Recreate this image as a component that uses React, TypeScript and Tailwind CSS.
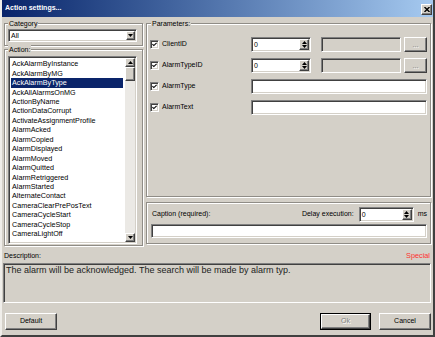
import React from 'react';

const sunken =
  'border border-t-[#808080] border-l-[#808080] border-b-white border-r-white shadow-[inset_1px_1px_0_#404040,inset_-1px_-1px_0_#d4d0c8] p-[1px]';
const raised =
  'border border-t-white border-l-white border-b-[#404040] border-r-[#404040] shadow-[inset_-1px_-1px_0_#808080,inset_1px_1px_0_#d4d0c8]';
const groupBox = 'relative border border-[#8f8c86] shadow-[1px_1px_0_#fff,inset_1px_1px_0_#fff]';

const actions = [
  'AckAlarmByInstance',
  'AckAlarmByMG',
  'AckAlarmByType',
  'AckAllAlarmsOnMG',
  'ActionByName',
  'ActionDataCorrupt',
  'ActivateAssignmentProfile',
  'AlarmAcked',
  'AlarmCopied',
  'AlarmDisplayed',
  'AlarmMoved',
  'AlarmQuitted',
  'AlarmRetriggered',
  'AlarmStarted',
  'AlternateContact',
  'CameraClearPrePosText',
  'CameraCycleStart',
  'CameraCycleStop',
  'CameraLightOff',
];

const params = [
  { label: 'ClientID', spin: true },
  { label: 'AlarmTypeID', spin: true },
  { label: 'AlarmType', spin: false },
  { label: 'AlarmText', spin: false },
];

function Arrow({ dir }: { dir: 'up' | 'down' }) {
  return (
    <svg width="5" height="3" viewBox="0 0 5 3">
      <polygon points={dir === 'up' ? '2.5,0 5,3 0,3' : '0,0 5,0 2.5,3'} fill="#000" />
    </svg>
  );
}

function SpinButton() {
  return (
    <div className={`${raised} w-[10px] h-full flex flex-col items-center justify-center gap-[1px] bg-[#d4d0c8]`}>
      <Arrow dir="up" />
      <Arrow dir="down" />
    </div>
  );
}

function SpinEdit({ width }: { width: string }) {
  return (
    <div className={`${sunken} ${width} h-[15px] bg-white flex items-stretch`}>
      <span className="flex-1 pl-[1px] leading-[11px]">0</span>
      <SpinButton />
    </div>
  );
}

function Check() {
  return (
    <div className={`${sunken} w-[9px] h-[9px] bg-white flex items-center justify-center p-0`}>
      <svg width="6" height="5" viewBox="0 0 6 5">
        <path d="M0.5 2 L2.2 3.8 L5.5 0.5" stroke="#000" strokeWidth="1.3" fill="none" />
      </svg>
    </div>
  );
}

export default function App() {
  return (
    <div className="w-[435px] h-[337px] bg-[#d4d0c8] border-x-2 border-b-2 border-l-[#f0eeea] border-r-[#404040] border-b-[#404040] flex flex-col text-black text-[7px] font-['Liberation_Sans',Arial,sans-serif]">
      {/* title bar */}
      <div className="h-[17px] flex items-center justify-between pl-[3px] pr-[1px] bg-linear-to-r from-[#0a246a] to-[#a6caf0]">
        <span className="text-white font-bold text-[7px]">Action settings...</span>
        <div className={`${raised} w-[11px] h-[11px] bg-[#d4d0c8] flex items-center justify-center mt-[1px]`}>
          <svg width="6" height="5" viewBox="0 0 6 5">
            <path d="M0.5 0 L5.5 5 M5.5 0 L0.5 5" stroke="#000" strokeWidth="1.4" />
          </svg>
        </div>
      </div>

      {/* main area */}
      <div className="flex gap-[3px] mt-[6px] ml-[2px]">
        {/* left column */}
        <div className="w-[139px] flex flex-col gap-[3px]">
          <div className={`${groupBox} h-[23px] pt-[5px] pl-[3px]`}>
            <span className="absolute left-[3px] top-[-5px] px-[1px] bg-[#d4d0c8] leading-[9px]">Category</span>
            <div className={`${sunken} w-[129px] h-[13px] bg-white flex items-stretch`}>
              <span className="flex-1 pl-[1px] leading-[9px]">All</span>
              <div className={`${raised} w-[9px] bg-[#d4d0c8] flex items-center justify-center`}>
                <Arrow dir="down" />
              </div>
            </div>
          </div>

          <div className={`${groupBox} h-[197px] pt-[6px] pl-[3px]`}>
            <span className="absolute left-[3px] top-[-5px] px-[1px] bg-[#d4d0c8] leading-[9px]">Action:</span>
            <div className={`${sunken} w-[129px] h-[188px] bg-white flex`}>
              <div className="flex-1 pt-[1.3px] pr-[2px] overflow-hidden text-[7.2px]">
                {actions.map((a) => (
                  <div
                    key={a}
                    className={`h-[9.45px] leading-[9.45px] pl-[1px] ml-[1px] ${
                      a === 'AckAlarmByType' ? 'bg-[#0a246a] text-white' : ''
                    }`}
                  >
                    {a}
                  </div>
                ))}
              </div>
              <div className="w-[10px] flex flex-col bg-[#ebe9e5]">
                <div className={`${raised} h-[9px] bg-[#d4d0c8] flex items-center justify-center`}>
                  <Arrow dir="up" />
                </div>
                <div className={`${raised} h-[14px] bg-[#d4d0c8]`} />
                <div className="flex-1" />
                <div className={`${raised} h-[9px] bg-[#d4d0c8] flex items-center justify-center`}>
                  <Arrow dir="down" />
                </div>
              </div>
            </div>
          </div>
        </div>

        {/* right column */}
        <div className="w-[285px] flex flex-col gap-[5px]">
          <div className={`${groupBox} h-[174px] pt-[13px] pl-[3px]`}>
            <span className="absolute left-[4px] top-[-5px] px-[1px] bg-[#d4d0c8] leading-[9px]">Parameters:</span>
            {params.map((p) => (
              <div key={p.label} className="flex items-center h-[15px] mb-[6px]">
                <Check />
                <span className="ml-[3px] w-[89px]">{p.label}</span>
                {p.spin ? (
                  <>
                    <SpinEdit width="w-[60px]" />
                    <div className={`${sunken} ml-[10px] w-[80px] h-[15px] bg-[#d4d0c8]`} />
                    <div
                      className={`${raised} ml-[3px] w-[23px] h-[15px] bg-[#d4d0c8] flex items-center justify-center text-[#808080] leading-[8px] [text-shadow:1px_1px_0_#fff]`}
                    >
                      ...
                    </div>
                  </>
                ) : (
                  <div className={`${sunken} w-[176px] h-[15px] bg-white`} />
                )}
              </div>
            ))}
          </div>

          <div className={`${groupBox} h-[42px] pt-[4px]`}>
            <div className="flex items-center h-[15px] pl-[5px] pr-[3px]">
              <span>Caption (required):</span>
              <span className="ml-auto">Delay execution:</span>
              <div className="ml-[5px]">
                <SpinEdit width="w-[55px]" />
              </div>
              <span className="ml-[4px]">ms</span>
            </div>
            <div className={`${sunken} ml-[4px] mt-[2px] w-[276px] h-[14px] bg-white`} />
          </div>
        </div>
      </div>

      {/* description */}
      <div className="flex items-center h-[10px] mt-[5px] ml-[2px] mr-[3px]">
        <span>Description:</span>
        <span className="ml-auto text-[#ff3030] text-[7.3px]">Special</span>
      </div>
      <div className={`${sunken} ml-[1px] mt-[2px] w-[428px] h-[40px] bg-[#d4d0c8] pl-[2px] pt-[1px] text-[9px] leading-[11px] text-[#222]`}>
        The alarm will be acknowledged. The search will be made by alarm typ.
      </div>

      {/* buttons */}
      <div className="flex items-center mt-[10px] ml-[3px] mr-[2px] h-[17px]">
        <div className={`${raised} w-[52px] h-[17px] flex items-center justify-center`}>Default</div>
        <div className="ml-auto w-[51px] h-[17px] border border-black">
          <div
            className={`${raised} w-full h-full flex items-center justify-center text-[#808080] [text-shadow:1px_1px_0_#fff]`}
          >
            Ok
          </div>
        </div>
        <div className={`${raised} ml-[8px] w-[52px] h-[17px] flex items-center justify-center`}>Cancel</div>
      </div>
    </div>
  );
}
